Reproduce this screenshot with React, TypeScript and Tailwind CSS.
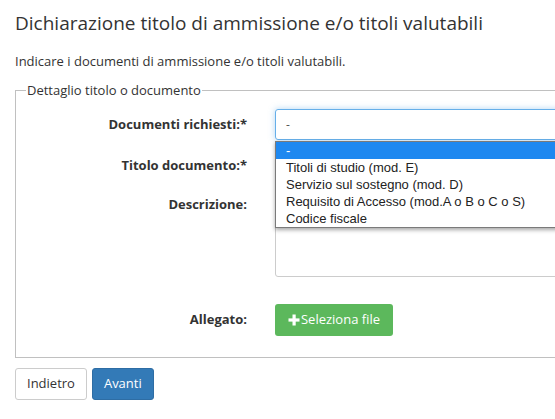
import React from "react";

const options = [
  "-",
  "Titoli di studio (mod. E)",
  "Servizio sul sostegno (mod. D)",
  "Requisito di Accesso (mod.A o B o C o S)",
  "Codice fiscale",
];

const Row = ({ label, top, children }: { label: string; top: string; children: React.ReactNode }) => (
  <div className={`flex ${top}`}>
    <label className="w-[231px] text-right text-[13px] font-bold text-[#333]">{label}</label>
    <div className="ml-[28px] flex-1">{children}</div>
  </div>
);

const App = () => {
  return (
    <div className="w-[555px] h-[419px] overflow-hidden bg-white" style={{ fontFamily: '"Open Sans", sans-serif' }}>
      <div className="w-[800px] px-[15px]">
        <h1 className="pt-[12px] text-[19px] leading-[22px] text-[#333]">
          Dichiarazione titolo di ammissione e/o titoli valutabili
        </h1>
        <p className="mt-[18px] text-[13px] leading-[18px] text-[#333]">
          Indicare i documenti di ammissione e/o titoli valutabili.
        </p>

        <fieldset className="mt-[11px] border border-[#c0c0c0] pb-[21px] min-w-0">
          <legend className="ml-[10px] px-[1px] text-[13px] leading-[18px] text-[#333]">
            Dettaglio titolo o documento
          </legend>

          <div className="relative">
            <Row label="Documenti richiesti:*" top="mt-[10px] items-center">
              <div className="h-[31px] border border-[#66afe9] rounded-[3px] shadow-[0_0_6px_rgba(102,175,233,0.5)] flex items-center pl-[10px] text-[12px] text-[#555]">
                -
              </div>
            </Row>
            <Row label="Titolo documento:*" top="mt-[11px] items-center">
              <div className="h-[30px] border border-[#ccc] rounded-[3px]" />
            </Row>
            <Row label="Descrizione:" top="mt-[14px] items-start">
              <div className="h-[82px] border border-[#ccc] rounded-[3px]" />
            </Row>
            <div className="flex items-center mt-[27px]">
              <label className="w-[231px] text-right text-[13px] font-bold text-[#333]">Allegato:</label>
              <div className="ml-[28px]">
                <button className="h-[32px] w-[118px] rounded-[3px] bg-[#5cb85c] text-white text-[13px] flex items-center justify-center">
                  <svg width="12" height="12" viewBox="0 0 12 12" className="mr-[1px]">
                    <rect x="4.5" y="0.5" width="3.2" height="11" fill="white" />
                    <rect x="0.5" y="4.4" width="11" height="3.2" fill="white" />
                  </svg>
                  Seleziona file
                </button>
              </div>
            </div>

            <div
              className="absolute left-[259px] top-[32px] w-[560px] bg-white border border-[#7a7a7a] shadow-[0_2px_4px_rgba(0,0,0,0.35)] text-[13px] leading-[17px] text-[#222]"
              style={{ fontFamily: '"Liberation Sans", Arial, sans-serif' }}
            >
              {options.map((o, i) => (
                <div key={i} className={`px-[10px] ${i === 0 ? "bg-[#1e88f0] text-white" : ""}`}>
                  {o}
                </div>
              ))}
            </div>
          </div>
        </fieldset>

        <div className="mt-[10px] flex gap-[5px]">
          <button className="h-[32px] px-[11px] border border-[#ccc] rounded-[3px] bg-white text-[13px] text-[#333]">
            Indietro
          </button>
          <button className="h-[32px] px-[11px] border border-[#2e6da4] rounded-[3px] bg-[#337ab7] text-[13px] text-white">
            Avanti
          </button>
        </div>
      </div>
    </div>
  );
};

export default App;
